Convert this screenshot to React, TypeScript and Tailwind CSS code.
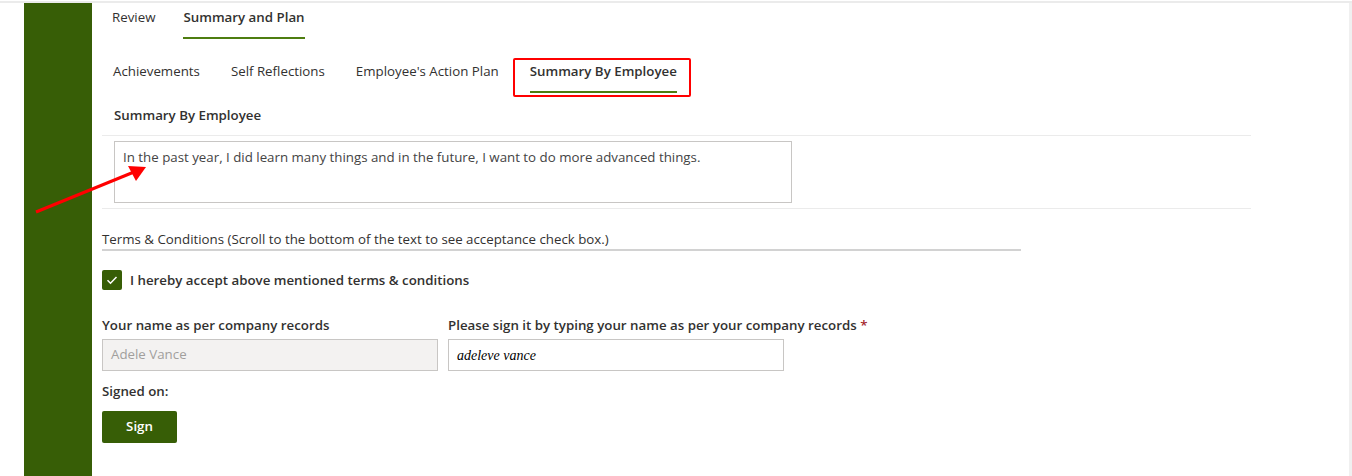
import React from 'react';

const font = { fontFamily: '"Open Sans", "Noto Sans", Arial, sans-serif' };

function Tab({ label, active, boxed }: { label: string; active?: boolean; boxed?: boolean }) {
  return (
    <div className="relative flex flex-col px-[3px]">
      <span
        className={`text-[13.3px] leading-[20px] whitespace-nowrap text-[#323130] ${
          active ? 'font-semibold' : 'font-normal'
        }`}
      >
        {label}
      </span>
      <div className={`mt-[10px] h-[2px] ${active ? 'bg-[#4e7d10]' : 'bg-transparent'}`} />
      {boxed && (
        <div className="pointer-events-none absolute -left-[14px] -right-[11px] -top-[3px] -bottom-[4px] rounded-[2px] border-2 border-[#ff0000]" />
      )}
    </div>
  );
}

export default function App() {
  return (
    <div className="relative h-[476px] w-[1352px] overflow-hidden bg-white pt-px" style={font}>
      <div className="flex h-full border-t-2 border-[#ebebeb]">
        <div className="w-[24px] shrink-0" />
        {/* Sidebar */}
        <div className="w-[68px] shrink-0 bg-[#375e06]" />

        {/* Main */}
        <div className="flex-1 pl-[10px]">
          {/* Top tabs */}
          <div className="flex gap-[22px] pl-[7px] pt-[4px]">
            <Tab label="Review" />
            <Tab label="Summary and Plan" active />
          </div>

          {/* Sub tabs */}
          <div className="mt-[22px] flex gap-[25px] pl-[8px]">
            <Tab label="Achievements" />
            <Tab label="Self Reflections" />
            <Tab label="Employee's Action Plan" />
            <Tab label="Summary By Employee" active boxed />
          </div>

          {/* Summary section */}
          <div className="mt-[12px] pl-[12px] text-[13.3px] font-semibold leading-[20px] text-[#323130]">
            Summary By Employee
          </div>
          <div className="mt-[10px] w-[1149px] border-y border-[#ebebeb] py-[5px]">
            <div className="ml-[12px] h-[62px] w-[678px] border border-[#c8c6c4] px-[8px] pt-[5px] text-[13.3px] leading-[20px] text-[#444]">
              In the past year, I did learn many things and in the future, I want to do more advanced things.
            </div>
          </div>

          {/* Terms */}
          <div className="mt-[20px] w-[919px] border-b-2 border-[#d2d2d2] text-[13.3px] leading-[20px] text-[#323130]">
            Terms &amp; Conditions (Scroll to the bottom of the text to see acceptance check box.)
          </div>

          <div className="mt-[19px] flex items-center gap-[8px]">
            <div className="flex h-[20px] w-[20px] items-center justify-center rounded-[2px] bg-[#375e06]">
              <svg width="14" height="14" viewBox="0 0 14 14" fill="none">
                <path d="M2.5 7.2l3 3L11.5 4" stroke="white" strokeWidth="1.5" />
              </svg>
            </div>
            <span className="text-[13.3px] font-semibold leading-[20px] text-[#323130]">
              I hereby accept above mentioned terms &amp; conditions
            </span>
          </div>

          {/* Names */}
          <div className="mt-[25px] flex gap-[10px]">
            <div className="flex w-[336px] flex-col gap-[4px]">
              <span className="text-[13.3px] font-semibold leading-[20px] text-[#323130]">
                Your name as per company records
              </span>
              <div className="flex h-[32px] items-center border border-[#c8c6c4] bg-[#f3f2f1] px-[8px] text-[13.3px] text-[#a19f9d]">
                Adele Vance
              </div>
            </div>
            <div className="flex w-[336px] flex-col gap-[4px]">
              <span className="whitespace-nowrap text-[13.3px] font-semibold leading-[20px] text-[#323130]">
                Please sign it by typing your name as per your company records{' '}
                <span className="text-[#a4262c]">*</span>
              </span>
              <div
                className="flex h-[32px] items-center border border-[#c8c6c4] bg-white px-[8px] text-[14px] italic text-black"
                style={{ fontFamily: '"Liberation Serif", "DejaVu Serif", serif' }}
              >
                adeleve vance
              </div>
            </div>
          </div>

          <div className="mt-[10px] text-[13.3px] font-semibold leading-[20px] text-[#323130]">Signed on:</div>
          <button className="mt-[10px] h-[32px] w-[75px] rounded-[2px] bg-[#375e06] text-[13.3px] font-semibold text-white">
            Sign
          </button>
        </div>

        <div className="w-[3px] shrink-0 bg-[#f0f0f0]" />
      </div>

      {/* Annotation arrow */}
      <svg className="pointer-events-none absolute left-0 top-0" width="200" height="240" viewBox="0 0 200 240">
        <line x1="36" y1="212" x2="134" y2="172" stroke="#ff0000" strokeWidth="3" />
        <polygon points="146,167 128,166 136,181" fill="#ff0000" />
      </svg>
    </div>
  );
}
